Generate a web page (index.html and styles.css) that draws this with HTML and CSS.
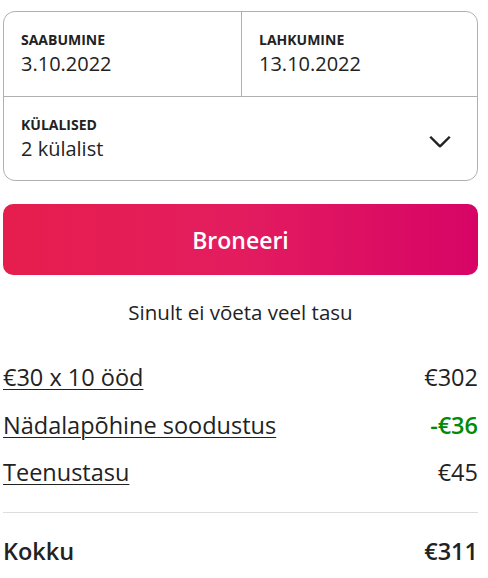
FILE: index.html
```html
<!DOCTYPE html>
<html lang="et">
<head>
<meta charset="utf-8">
<link rel="stylesheet" href="styles.css">
</head>
<body>
<div class="wrap">
  <div class="picker">
    <div class="dates">
      <div class="cell">
        <div class="label">SAABUMINE</div>
        <div class="value">3.10.2022</div>
      </div>
      <div class="cell cell-right">
        <div class="label">LAHKUMINE</div>
        <div class="value">13.10.2022</div>
      </div>
    </div>
    <div class="guests">
      <div>
        <div class="label">KÜLALISED</div>
        <div class="value">2 külalist</div>
      </div>
      <svg class="chev" viewBox="0 0 32 32" width="26" height="26" aria-hidden="true"><path d="M28 12 16.7 23.3a1 1 0 0 1-1.4 0L4 12" fill="none" stroke="#222" stroke-width="3"/></svg>
    </div>
  </div>
  <button class="book">Broneeri</button>
  <p class="note">Sinult ei võeta veel tasu</p>
  <div class="rows">
    <div class="row"><span class="link">€30 x 10 ööd</span><span>€302</span></div>
    <div class="row"><span class="link">Nädalapõhine soodustus</span><span class="green">-€36</span></div>
    <div class="row"><span class="link">Teenustasu</span><span>€45</span></div>
  </div>
  <div class="total"><span>Kokku</span><span>€311</span></div>
</div>
</body>
</html>
```
FILE: styles.css
```css
html, body { margin: 0; padding: 0; background: #fff; }
body { font-family: "Open Sans", "Liberation Sans", sans-serif; color: #222; }
.wrap { width: 475px; padding: 11px 0 0 3px; }
.picker { border: 1px solid #b0b0b0; border-radius: 12px; }
.dates { display: grid; grid-template-columns: 237px 1fr; border-bottom: 1px solid #b0b0b0; }
.cell { padding: 19px 17px 18px; }
.cell-right { border-left: 1px solid #b0b0b0; }
.label { font-size: 14px; font-weight: 700; line-height: 18px; }
.value { font-size: 20px; line-height: 28px; margin-top: 1px; color: #222; }
.guests { display: flex; justify-content: space-between; align-items: center; padding: 19px 24px 17px 17px; }
.chev { display: block; }
.book { display: block; width: 100%; height: 71px; margin-top: 23px; border: 0; border-radius: 10px; background: linear-gradient(to right, #e61e4d 0%, #e31c5f 50%, #d70466 100%); color: #fff; font-family: inherit; font-size: 23px; font-weight: 600; }
.note { margin: 23px 0 0; text-align: center; font-size: 20.5px; line-height: 28px; color: #222; }
.rows { margin-top: 37px; display: flex; flex-direction: column; gap: 19.5px; border-bottom: 1px solid #dddddd; padding-bottom: 26px; }
.row { display: flex; justify-content: space-between; font-size: 23.5px; line-height: 28px; }
.link { text-decoration: underline; text-underline-offset: 3px; text-decoration-thickness: 1px; }
.green { color: #008a05; font-weight: 600; }
.total { display: flex; justify-content: space-between; font-size: 23.5px; font-weight: 600; line-height: 28px; margin-top: 24px; }
```
